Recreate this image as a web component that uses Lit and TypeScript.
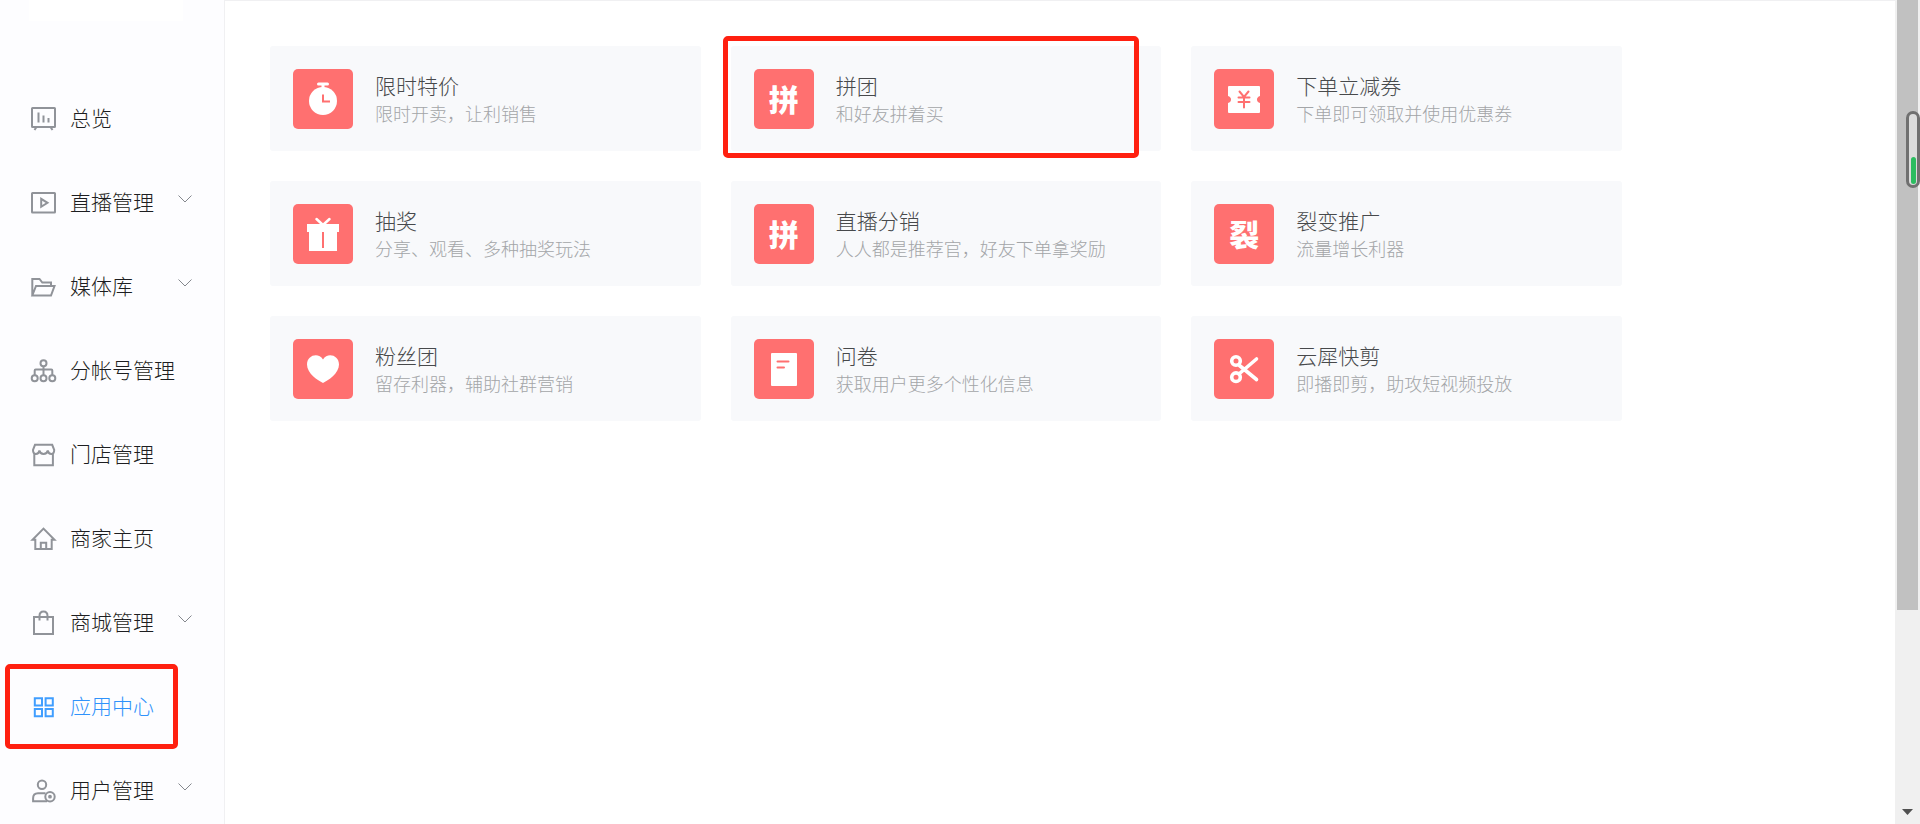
import { LitElement, html, svg, css, nothing } from "lit";
import type { SVGTemplateResult } from "lit";
import { customElement, property, state } from "lit/decorators.js";
import { classMap } from "lit/directives/class-map.js";

interface NavItem {
  id: string;
  label: string;
  expandable?: boolean;
}

interface AppCard {
  icon: string;
  title: string;
  desc: string;
  marked?: boolean;
}

const NAV: NavItem[] = [
  { id: "overview", label: "总览" },
  { id: "live", label: "直播管理", expandable: true },
  { id: "media", label: "媒体库", expandable: true },
  { id: "accounts", label: "分帐号管理" },
  { id: "stores", label: "门店管理" },
  { id: "home", label: "商家主页" },
  { id: "mall", label: "商城管理", expandable: true },
  { id: "apps", label: "应用中心" },
  { id: "users", label: "用户管理", expandable: true },
];

const CARDS: AppCard[] = [
  { icon: "timer", title: "限时特价", desc: "限时开卖，让利销售" },
  { icon: "拼", title: "拼团", desc: "和好友拼着买", marked: true },
  { icon: "coupon", title: "下单立减券", desc: "下单即可领取并使用优惠券" },
  { icon: "gift", title: "抽奖", desc: "分享、观看、多种抽奖玩法" },
  { icon: "拼", title: "直播分销", desc: "人人都是推荐官，好友下单拿奖励" },
  { icon: "裂", title: "裂变推广", desc: "流量增长利器" },
  { icon: "heart", title: "粉丝团", desc: "留存利器，辅助社群营销" },
  { icon: "form", title: "问卷", desc: "获取用户更多个性化信息" },
  { icon: "scissors", title: "云犀快剪", desc: "即播即剪，助攻短视频投放" },
];

const NAV_ICONS: Record<string, SVGTemplateResult> = {
  overview: svg`<rect x="2" y="4" width="23" height="19" rx="0.5"/><path d="M6.5 23 4.5 26M20.5 23l2 3M8.5 8.5v10M13.5 11.5v7M18.5 14v4.500"/>`,
  live: svg`<rect x="2" y="5" width="23" height="19.500" rx="0.5"/><path d="M11.200 10.800v8l6.300-4z"/>`,
  media: svg`<path d="M2.300 23.500V7H9.500l2.800 3.500h8.700V14M2.300 23.500 6 14h18.500L21 23.500z"/>`,
  accounts: svg`<circle cx="13.500" cy="7.300" r="3"/><circle cx="4.700" cy="22.300" r="3"/><circle cx="13.500" cy="22.300" r="3"/><circle cx="22.300" cy="22.300" r="3"/><path d="M13.500 10.500v8.500M4.700 19v-4.500q0-1 1-1h15.600q1 0 1 1V19"/>`,
  stores: svg`<path d="M5 4.800h17.200L24.200 10q0 4-3 4-2.700 0-3.400-3.500Q17 14 13.600 14T9.400 10.500Q8.700 14 6 14q-3 0-3-4zM4.300 13.500v11.700h18.600V13.500"/>`,
  home: svg`<path d="M5.300 15.800H2.500L13.500 4.600l11 11.200h-2.800V25H5.300zM10.800 25v-6.300h5.400V25"/>`,
  mall: svg`<path d="M4 9h19v17H4zM9.500 12.500V8q0-4.500 4-4.500t4 4.500v4.500"/>`,
  apps: svg`<path d="M4.800 6.200h7.200v7.200H4.800zM15.600 6.200h7.200v7.200h-7.200zM4.800 17h7.200v7.200H4.800zM15.600 17h7.200v7.200h-7.200z"/>`,
  users: svg`<circle cx="12" cy="8.700" r="4.200"/><path d="M15.500 17.200H8q-4.900 0-4.900 5v3H17"/><circle cx="20" cy="20.700" r="4.700"/><circle cx="20" cy="20.700" r="0.900"/>`,
};

const TILE_ICONS: Record<string, SVGTemplateResult> = {
  timer: svg`
    <circle cx="30" cy="32" r="14" fill="#fff"/>
    <path d="M25.500 15h9M30 15v4" stroke="#fff" stroke-width="3" stroke-linecap="round"/>
    <path d="M30 25.500V32.500h7" stroke="#ff7070" stroke-width="2"/>`,
  coupon: svg`
    <path d="M15 17h30q1 0 1 1v9q-3 1-3 3.500t3 3.500v9q0 1-1 1H15q-1 0-1-1v-9q3-1 3-3.500T14 27v-9q0-1 1-1z" fill="#fff"/>
    <path d="M25.500 22.500l4.500 5.500 4.500-5.500M24.500 28.500h11M24.500 33h11M30 28v10.500" stroke="#ff7070" stroke-width="2" stroke-linecap="round"/>`,
  gift: svg`
    <path d="M14 20h32v8h-2v19H16V28h-2z" fill="#fff"/>
    <path d="M23.500 15l6.500 6 6.500-6" stroke="#fff" stroke-width="2.500" stroke-linecap="round"/>
    <path d="M30 28v16" stroke="#ff7070" stroke-width="2"/>`,
  heart: svg`
    <path d="M30 44C25 41.500 14 34.500 14 25.500c0-9.500 11.500-12.500 16-5 4.500-7.500 16-4.500 16 5C46 34.500 35 41.500 30 44z" fill="#fff"/>`,
  form: svg`
    <rect x="17" y="14" width="26" height="33" rx="1" fill="#fff"/>
    <path d="M23.500 22.500h11M23.500 28.500h6.500" stroke="#ff7070" stroke-width="2" stroke-linecap="round"/>`,
  scissors: svg`
    <circle cx="22" cy="22" r="4.300" stroke="#fff" stroke-width="3.600"/>
    <circle cx="22" cy="38.200" r="4.300" stroke="#fff" stroke-width="3.600"/>
    <path d="M25.500 34.500L42.500 20M25.500 26.500l17 14" stroke="#fff" stroke-width="3.600" stroke-linecap="round"/>`,
};

@customElement("side-nav")
export class SideNav extends LitElement {
  @property() active = "apps";

  static styles = css`
    :host {
      display: block;
      box-sizing: border-box;
      border-right: 1px solid #f0f0f2;
      background: #fdfdff;
    }
    .logo {
      height: 21px;
      margin: 0 41px 55px 29px;
      background: #fff;
    }
    .list {
      list-style: none;
      margin: 0;
      padding: 0;
    }
    .row {
      position: relative;
    }
    .item {
      display: flex;
      align-items: center;
      gap: 12px;
      box-sizing: border-box;
      width: 100%;
      height: 84px;
      padding: 0 32px 0 30px;
      border: 0;
      background: none;
      color: #1d1e21;
      font: inherit;
      font-size: 21px;
      line-height: 30px;
      text-align: left;
      text-decoration: none;
      cursor: pointer;
    }
    .icon {
      flex: none;
      width: 28px;
      height: 28px;
      fill: none;
      stroke: #909399;
      stroke-width: 2;
    }
    .label {
      flex: 1;
      padding-bottom: 2px;
      white-space: nowrap;
    }
    .arrow {
      flex: none;
      width: 14px;
      height: 8px;
      margin-bottom: 6px;
      fill: none;
      stroke: #85888e;
    }
    .active {
      color: #2f92fb;
    }
    .active .icon {
      stroke: #409eff;
    }
    .marker {
      position: absolute;
      inset: 0 46px -1px 5px;
      border: 5px solid #ff2010;
      border-radius: 5px;
      pointer-events: none;
    }
  `;

  private content(item: NavItem) {
    return html`
      <svg class="icon" viewBox="0 0 28 28" aria-hidden="true">${NAV_ICONS[item.id]}</svg>
      <span class="label">${item.label}</span>
      ${item.expandable
        ? html`<svg class="arrow" viewBox="0 0 14 8" aria-hidden="true"><path d="M0.500 0.500 7 7l6.500-6.500"/></svg>`
        : nothing}
    `;
  }

  render() {
    return html`
      <div class="logo"></div>
      <nav>
        <ul class="list">
          ${NAV.map((item) => {
            const current = item.id === this.active;
            return html`<li class="row">
              ${item.expandable
                ? html`<button class="item" type="button" aria-expanded="false">${this.content(item)}</button>`
                : html`<a class=${classMap({ item: true, active: current })} href="#${item.id}">${this.content(item)}</a>`}
              ${current ? html`<span class="marker"></span>` : nothing}
            </li>`;
          })}
        </ul>
      </nav>
    `;
  }
}

@customElement("app-card")
export class AppCardElement extends LitElement {
  @property({ attribute: false }) card!: AppCard;

  static styles = css`
    :host {
      display: block;
      position: relative;
      min-width: 0;
    }
    .card {
      display: flex;
      align-items: center;
      gap: 22px;
      box-sizing: border-box;
      min-height: 105px;
      padding: 22px 23px;
      border-radius: 3px;
      background: #f8f9fb;
      color: #47494b;
      text-decoration: none;
    }
    .tile {
      flex: none;
      display: grid;
      place-items: start center;
      width: 60px;
      height: 60px;
      border-radius: 5px;
      background: #ff7070;
      color: #fff;
      font-size: 30px;
      font-weight: 900;
      line-height: 58px;
    }
    .glyph {
      width: 60px;
      height: 60px;
      fill: none;
    }
    .text {
      min-width: 0;
      padding-top: 1px;
    }
    .title,
    .desc {
      margin: 0;
      font-weight: inherit;
      line-height: 28px;
    }
    .title {
      font-size: 21px;
    }
    .desc {
      color: #a3a5a8;
      font-size: 18px;
    }
    .marker {
      position: absolute;
      inset: -10px 22px -7px -8px;
      border: 5px solid #ff2010;
      border-radius: 5px;
      pointer-events: none;
    }
  `;

  render() {
    const { icon, title, desc, marked } = this.card;
    const glyph = TILE_ICONS[icon];
    return html`
      <a class="card" href="#app">
        <span class="tile" aria-hidden="true">
          ${glyph ? html`<svg class="glyph" viewBox="0 0 60 60">${glyph}</svg>` : icon}
        </span>
        <div class="text">
          <h3 class="title">${title}</h3>
          <p class="desc">${desc}</p>
        </div>
      </a>
      ${marked ? html`<span class="marker"></span>` : nothing}
    `;
  }
}

@customElement("scroll-track")
export class ScrollTrack extends LitElement {
  static styles = css`
    :host {
      display: flex;
      flex-direction: column;
      justify-content: space-between;
      align-items: center;
      position: relative;
      background: #f0f0f0;
    }
    .thumb {
      width: 21px;
      height: 74%;
      background: #c1c1c1;
    }
    .arrow {
      width: 11px;
      height: 6px;
      margin-bottom: 9px;
      fill: #505050;
    }
    .meter {
      position: absolute;
      top: 111px;
      right: 0;
      display: flex;
      align-items: flex-end;
      justify-content: center;
      box-sizing: border-box;
      width: 14px;
      height: 77px;
      padding-bottom: 1px;
      border: 3px solid #707070;
      border-radius: 7px;
      background: #dcdcdc;
    }
    .level {
      width: 5px;
      height: 27px;
      border-radius: 3px;
      background: #2bbd60;
    }
  `;

  render() {
    return html`
      <div class="thumb"></div>
      <svg class="arrow" viewBox="0 0 11 6"><path d="M0 0h11L5.500 6z"/></svg>
      <div class="meter"><span class="level"></span></div>
    `;
  }
}

@customElement("app-root")
export class AppRoot extends LitElement {
  @state() private active = "apps";

  static styles = css`
    :host {
      display: grid;
      grid-template-columns: 225px minmax(0, 1fr) 25px;
      grid-template-rows: minmax(0, 1fr);
      height: 100vh;
      overflow: hidden;
      background: #fff;
      font-family: "Noto Sans CJK SC", sans-serif;
      font-weight: 300;
    }
    .main {
      box-sizing: border-box;
      padding: 45px 273px 45px 45px;
      border-top: 1px solid #f0f0f2;
    }
    .grid {
      display: grid;
      grid-template-columns: repeat(3, minmax(0, 1fr));
      gap: 30px;
    }
  `;

  render() {
    return html`
      <side-nav .active=${this.active}></side-nav>
      <main class="main">
        <div class="grid">${CARDS.map((card) => html`<app-card .card=${card}></app-card>`)}</div>
      </main>
      <scroll-track aria-hidden="true"></scroll-track>
    `;
  }
}
